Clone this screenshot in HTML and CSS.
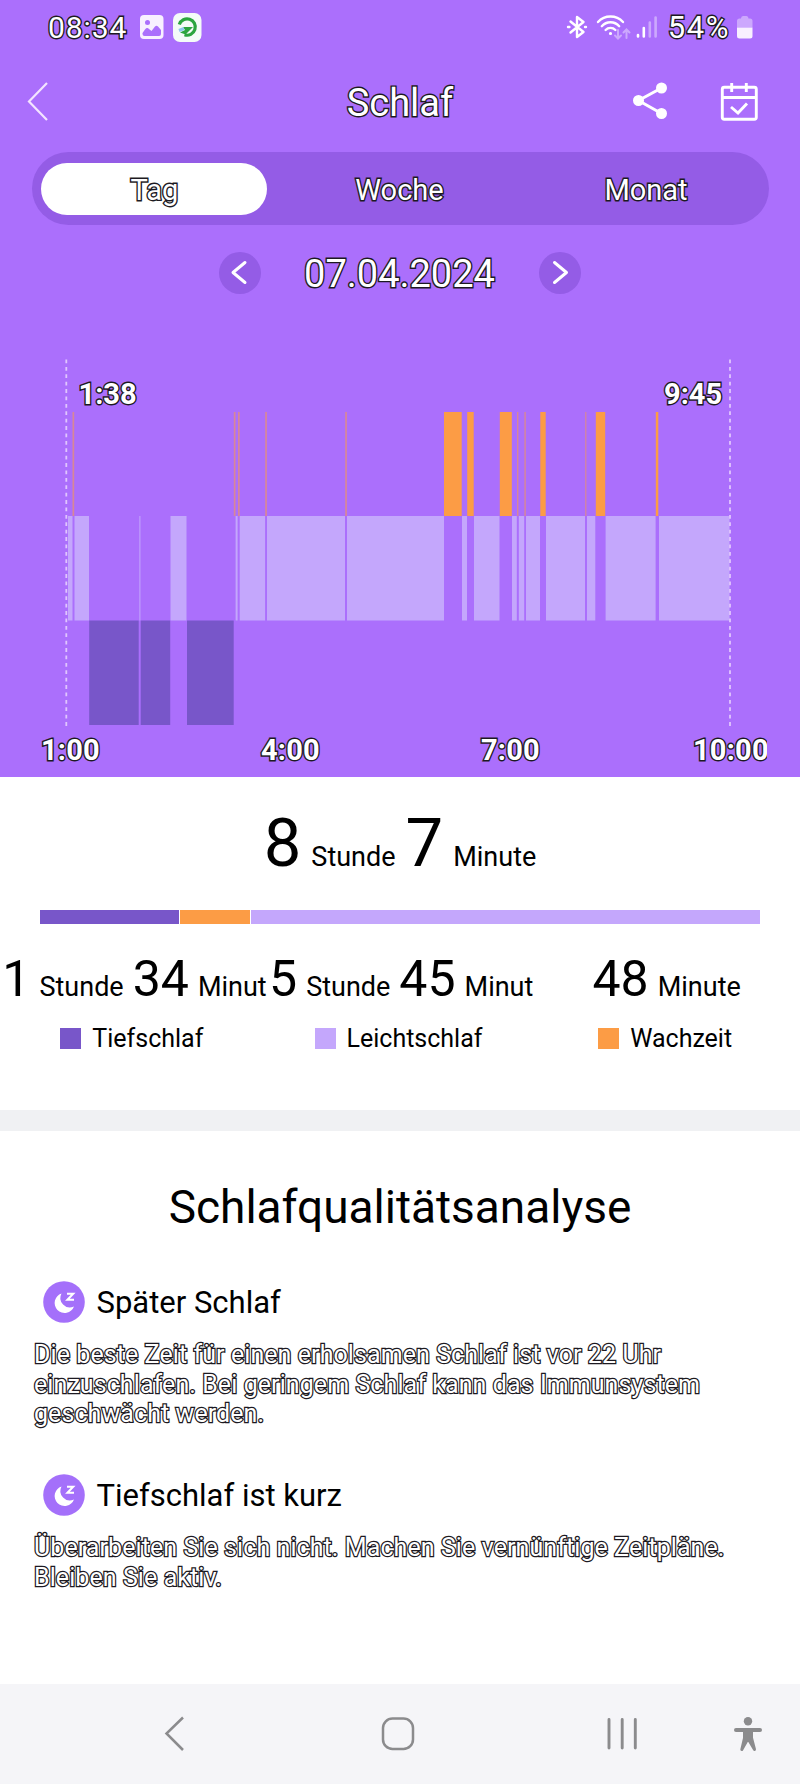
FILE: index.html
```html
<!DOCTYPE html>
<html lang="de">
<head>
  <meta charset="utf-8" />
  <meta name="viewport" content="width=device-width, initial-scale=1">
  <title>Schlaf</title>
  <link rel="stylesheet" href="styles.css">
</head>
<body>
  <div class="top">
    <div class="status">
      <span class="status__time outline">08:34</span>
      <svg class="status__image" width="24" height="24" viewBox="0 0 24 24">
        <rect x="0" y="0" width="23.5" height="24" rx="4" fill="#f8f0ff"/>
        <circle cx="7.5" cy="7.5" r="2.5" fill="#ab6ffc"/>
        <path d="M2.5 18 L5 14.5 Q7 12 9 14 L11.5 16 L15 11.5 Q16.5 10 18 11.5 L21 15 V19 Q21 21 19 21 H4.5 Q2.5 21 2.5 19 Z" fill="#ab6ffc"/>
      </svg>
      <svg class="status__app" width="29" height="29" viewBox="0 0 29 29">
        <rect width="28.5" height="29" rx="7" fill="#f4fbf8"/>
        <path d="M6.3 11.5 A8.2 8.2 0 1 1 11.5 21.8" fill="none" stroke="#2ba53f" stroke-width="3.2"/>
        <path d="M10 14 H20 L12.5 21.5 L7 19.5 L12 17 Z" fill="#2ba53f"/>
        <path d="M6 17.5 L11 15.5" stroke="#8fc8ee" stroke-width="3"/>
      </svg>
      <div class="status__right">
        <svg class="status__bt" width="22" height="24" viewBox="0 0 22 24" fill="none" stroke="#fff" stroke-width="2.4" stroke-linejoin="round" stroke-linecap="round">
          <path d="M4.5 6.5 L17.5 17 L11 22 V2 L17.5 7 L4.5 17.5"/>
          <path d="M2 12 H3.4 M19 12 H20"/>
        </svg>
        <svg class="status__wifi" width="36" height="26" viewBox="0 0 36 26" fill="none" stroke="#fff" stroke-width="2.4" stroke-linecap="round">
          <path d="M2 8 A17 17 0 0 1 27 8"/>
          <path d="M5.8 12.2 A11.6 11.6 0 0 1 23.2 12.2"/>
          <path d="M9.6 16 A6.8 6.8 0 0 1 19.4 16"/>
          <circle cx="14.5" cy="19.5" r="1" fill="#fff" stroke-width="1.2"/>
          <path class="faded" d="M22 16 V24 M19 21.5 L22 24.5 L25 21.5 M30.5 24 V16 M27.5 18.5 L30.5 15.5 L33.5 18.5" stroke-width="2"/>
        </svg>
        <svg class="status__signal" width="22" height="24" viewBox="0 0 22 24" stroke="#fff" stroke-width="2.6" stroke-linecap="round">
          <path d="M2 20 V21.5 M7.8 13 V21.5"/>
          <path class="faded" d="M13.8 7.5 V21.5 M19.6 2.5 V21.5"/>
        </svg>
        <span class="status__percent outline">54%</span>
        <svg class="status__battery" width="16" height="23" viewBox="0 0 16 23">
          <path class="faded" d="M0 11.5 V5 Q0 2.5 2.5 2.5 H4 Q4 0 6 0 H9.5 Q11.5 0 11.5 2.5 H13 Q15.5 2.5 15.5 5 V11.5 Z" fill="#fff"/>
          <path d="M0 11.5 H15.5 V20 Q15.5 22.5 13 22.5 H2.5 Q0 22.5 0 20 Z" fill="#f8f0ff"/>
        </svg>
      </div>
    </div>

    <div class="header">
      <svg class="header__back" width="24" height="42" viewBox="0 0 24 42" fill="none" stroke="#f3e4ff" stroke-width="2.2">
        <path d="M20 2 L2 20.5 L20 39"/>
      </svg>
      <h1 class="header__title outline">Schlaf</h1>
      <div class="header__icons">
        <svg width="36" height="38" viewBox="0 0 36 38" fill="#fff" stroke="#fff" stroke-width="3">
          <path d="M29.5 6 L6.5 18.5 L29.5 31.5" fill="none"/>
          <circle cx="6.5" cy="18.5" r="4"/>
          <circle cx="29.5" cy="6" r="4"/>
          <circle cx="29.5" cy="31.5" r="4"/>
        </svg>
        <svg width="38" height="40" viewBox="0 0 38 40" fill="none" stroke="#fff" stroke-width="2.9">
          <rect x="2.3" y="6.3" width="34" height="32" rx="2"/>
          <path d="M2.3 16.5 H36.3 M11.7 2 V11 M26.3 2 V11"/>
          <path d="M11 26 L18 32 L27 22.5"/>
        </svg>
      </div>
    </div>

    <div class="tabs">
      <div class="tab tab--active outline">Tag</div>
      <div class="tab outline">Woche</div>
      <div class="tab outline">Monat</div>
    </div>

    <div class="date">
      <div class="date__btn">
        <svg width="42" height="42" viewBox="0 0 42 42" fill="none" stroke="#fff" stroke-width="3" stroke-linecap="round" stroke-linejoin="round">
          <path d="M26 10.5 L14 20.5 L26 30.5"/>
        </svg>
      </div>
      <div class="date__text outline">07.04.2024</div>
      <div class="date__btn">
        <svg width="42" height="42" viewBox="0 0 42 42" fill="none" stroke="#fff" stroke-width="3" stroke-linecap="round" stroke-linejoin="round">
          <path d="M15.5 10.5 L27.5 20.5 L15.5 30.5"/>
        </svg>
      </div>
    </div>

    <div class="chart">
      <!-- rows start at 62 (awake), 166 (light) and 270.5 (deep) -->
      <svg class="chart__svg" width="800" height="384" viewBox="0 0 800 384">
        <g class="light">
          <rect x="68" y="166" width="4.5" height="104.5"/>
          <rect x="74.5" y="166" width="14.5" height="104.5"/>
          <rect x="139.4" y="166" width="1" height="104.5"/>
          <rect x="170.5" y="166" width="16" height="104.5"/>
          <rect x="235.6" y="166" width="2" height="104.5"/>
          <rect x="239.7" y="166" width="25.4" height="104.5"/>
          <rect x="267" y="166" width="78" height="104.5"/>
          <rect x="347" y="166" width="97" height="104.5"/>
          <rect x="462" y="166" width="5" height="104.5"/>
          <rect x="474" y="166" width="25.5" height="104.5"/>
          <rect x="512" y="166" width="4.8" height="104.5"/>
          <rect x="518.8" y="166" width="5.4" height="104.5"/>
          <rect x="526" y="166" width="14" height="104.5"/>
          <rect x="546" y="166" width="39" height="104.5"/>
          <rect x="587" y="166" width="8.3" height="104.5"/>
          <rect x="605.6" y="166" width="50" height="104.5"/>
          <rect x="659" y="166" width="70.5" height="104.5"/>
        </g>
        <g class="deep">
          <rect x="89.2" y="270.5" width="49.5" height="104.5"/>
          <rect x="140.7" y="270.5" width="29.5" height="104.5"/>
          <rect x="187" y="270.5" width="46.7" height="104.5"/>
        </g>
        <g class="awake">
          <rect x="444" y="62" width="17.7" height="104"/>
          <rect x="467.2" y="62" width="6.5" height="104"/>
          <rect x="499.8" y="62" width="12" height="104"/>
          <rect x="540.3" y="62" width="5.4" height="104"/>
          <rect x="595.8" y="62" width="9.4" height="104"/>
          <rect x="655.8" y="62" width="2.5" height="104"/>
        </g>
        <g class="awake awake--thin">
          <rect x="72.5" y="62" width="1.7" height="104"/>
          <rect x="233.8" y="62" width="1.7" height="104"/>
          <rect x="238" y="62" width="1.7" height="104"/>
          <rect x="265.2" y="62" width="1.7" height="104"/>
          <rect x="345.2" y="62" width="1.7" height="104"/>
          <rect x="517" y="62" width="1.4" height="104"/>
          <rect x="524.4" y="62" width="1.4" height="104"/>
          <rect x="585.2" y="62" width="1.2" height="104"/>
        </g>
        <path class="chart__line" d="M66.3 9.5 V376 M730 9.5 V376"/>
        <text class="chart__text" x="78.5" y="54">1:38</text>
        <text class="chart__text" x="664" y="54">9:45</text>
      </svg>
      <div class="chart__axis">
        <span>1:00</span>
        <span>4:00</span>
        <span>7:00</span>
        <span>10:00</span>
      </div>
    </div>
  </div>

  <div class="summary">
    <div class="total">
      <span class="total__num">8</span>
      <span class="unit">Stunde</span>
      <span class="total__num">7</span>
      <span class="unit">Minute</span>
    </div>
    <div class="bar">
      <div class="bar__deep"></div>
      <div class="bar__awake"></div>
      <div class="bar__light"></div>
    </div>
    <div class="stats">
      <div class="stat">
        <div class="stat__value stat__value--long">
          <span class="stat__num">1</span>
          <span class="unit">Stunde</span>
          <span class="stat__num">34</span>
          <span class="unit">Minut</span>
        </div>
        <div class="stat__label"><i class="box box--deep"></i>Tiefschlaf</div>
      </div>
      <div class="stat">
        <div class="stat__value stat__value--long">
          <span class="stat__num">5</span>
          <span class="unit">Stunde</span>
          <span class="stat__num">45</span>
          <span class="unit">Minut</span>
        </div>
        <div class="stat__label"><i class="box box--light"></i>Leichtschlaf</div>
      </div>
      <div class="stat">
        <div class="stat__value">
          <span class="stat__num">48</span>
          <span class="unit">Minute</span>
        </div>
        <div class="stat__label"><i class="box box--awake"></i>Wachzeit</div>
      </div>
    </div>
  </div>

  <div class="analysis">
    <h2 class="analysis__title">Schlafqualitätsanalyse</h2>
    <div class="tip">
      <div class="tip__head">
        <svg width="42" height="42" viewBox="0 0 42 42">
          <circle cx="21" cy="21" r="20.8" fill="#a470fa"/>
          <path d="M18.5 12.5 A10 10 0 1 0 31 25.5 A9.5 9.5 0 0 1 18.5 12.5 Z" fill="#fff"/>
          <path d="M24 12.7 H30.2 L24.4 18.7 H31" fill="none" stroke="#fff" stroke-width="2"/>
        </svg>
        <h3 class="tip__title">Später Schlaf</h3>
      </div>
      <p class="tip__text outline">Die beste Zeit für einen erholsamen Schlaf ist vor 22 Uhr<br>einzuschlafen. Bei geringem Schlaf kann das Immunsystem<br>geschwächt werden.</p>
    </div>
    <div class="tip">
      <div class="tip__head">
        <svg width="42" height="42" viewBox="0 0 42 42">
          <circle cx="21" cy="21" r="20.8" fill="#a470fa"/>
          <path d="M18.5 12.5 A10 10 0 1 0 31 25.5 A9.5 9.5 0 0 1 18.5 12.5 Z" fill="#fff"/>
          <path d="M24 12.7 H30.2 L24.4 18.7 H31" fill="none" stroke="#fff" stroke-width="2"/>
        </svg>
        <h3 class="tip__title">Tiefschlaf ist kurz</h3>
      </div>
      <p class="tip__text outline">Überarbeiten Sie sich nicht. Machen Sie vernünftige Zeitpläne.<br>Bleiben Sie aktiv.</p>
    </div>
  </div>

  <div class="nav">
    <svg class="nav__back" width="24" height="36" viewBox="0 0 24 36" fill="none" stroke="#8b8b8d" stroke-width="2.5">
      <path d="M20 1.5 L3.5 17.5 L20 34"/>
    </svg>
    <svg class="nav__home" width="34" height="36" viewBox="0 0 34 36" fill="none" stroke="#8b8b8d" stroke-width="2.5">
      <rect x="2" y="2.5" width="30" height="30.5" rx="9.5"/>
    </svg>
    <svg class="nav__recent" width="32" height="36" viewBox="0 0 32 36" stroke="#8b8b8d" stroke-width="2.9" stroke-linecap="round">
      <path d="M3 3.5 V32 M16.2 3.5 V32 M29.3 3.5 V32"/>
    </svg>
    <svg class="nav__access" width="30" height="36" viewBox="0 0 30 36" fill="#8b8b8d" stroke="#8b8b8d" stroke-linecap="round" stroke-linejoin="round">
      <circle cx="15" cy="5.3" r="4.2" stroke="none"/>
      <path d="M3 14 H27" stroke-width="4"/>
      <path d="M11.5 15 H18.5 V22 L21.5 33.5 L15 22.5 L8.8 33.5 L11.5 22 Z" stroke-width="3"/>
    </svg>
  </div>
</body>
</html>
```
FILE: styles.css
```css
*{
  box-sizing: border-box;
}
body{
  margin: 0;
  width: 800px;
  background: #fff;
  color: #000;
  font-family: Roboto, "Liberation Sans", sans-serif;
}
h1, h2, h3, p{
  margin: 0;
  font-weight: 400;
}
svg{
  display: block;
  flex-shrink: 0;
}
.outline{
  color: #fff;
  -webkit-text-stroke: 2.8px #1d1a22;
  paint-order: stroke fill;
}
.faded{
  opacity: 0.4;
}

.top{
  height: 777px;
  background: #ab6ffc;
}

/* status bar */
.status{
  height: 54px;
  padding: 0 47px 0 48px;
  display: flex;
  align-items: center;
}
.status__time{
  width: 92px;
  font-size: 30px;
  letter-spacing: 0.9px;
}
.status__app{
  margin-left: 9px;
}
.status__right{
  margin-left: auto;
  display: flex;
  align-items: center;
}
.status__wifi{
  margin-left: 8px;
}
.status__signal{
  margin-left: 4px;
}
.status__percent{
  margin: 0 7px 0 10px;
  font-size: 31px;
  letter-spacing: 1.6px;
}

/* title row */
.header{
  height: 98px;
  padding: 0 42px 0 27px;
  display: grid;
  grid-template-columns: 140px 1fr 140px;
  align-items: center;
}
.header__back{
  margin-top: -2px;
}
.header__title{
  padding-left: 15px;
  font-size: 38px;
  text-align: center;
}
.header__icons{
  display: flex;
  justify-content: space-between;
  align-items: center;
  width: 126px;
  margin: -4px 0 0 14px;
}

.tabs{
  width: 737px;
  height: 73px;
  margin-left: 32px;
  padding: 0 9px;
  display: flex;
  justify-content: space-between;
  align-items: center;
  background: #945ce6;
  border-radius: 37px;
}
.tab{
  width: 226px;
  height: 52px;
  padding-right: 2px;
  line-height: 55px;
  text-align: center;
  font-size: 29px;
  border-radius: 26px;
}
.tab--active{
  padding: 0 0 0 1px;
  background: #fff;
}

.date{
  height: 95px;
  padding-right: 1px;
  display: flex;
  justify-content: center;
  align-items: center;
}
.date__btn{
  width: 42px;
  height: 42px;
  border-radius: 50%;
  background: #945ce6;
}
.date__text{
  width: 278px;
  padding-top: 2px;
  text-align: center;
  font-size: 38px;
}

/* sleep chart */
.chart{
  padding-top: 30px;
}
.light{
  fill: #c4a7fc;
}
.deep{
  fill: #7856c9;
}
.awake{
  fill: #fc9c45;
}
.awake--thin{
  opacity: 0.55;
}
.chart__line{
  stroke: #e0c6fd;
  stroke-width: 1.8;
  stroke-dasharray: 3.8 3.6;
}
.chart__text{
  font-size: 29px;
  font-weight: 700;
  fill: #fff;
  stroke: #1d1a22;
  stroke-width: 2.8px;
  paint-order: stroke fill;
}
/* one label every three hours, the last one is cut at the edge */
.chart__axis{
  width: 726px;
  height: 34px;
  margin-left: 41px;
  display: grid;
  grid-template-columns: 220px 220px 212px 74px;
  overflow: hidden;
  font-size: 29px;
  font-weight: 700;
  line-height: 33px;
  letter-spacing: 0.2px;
  color: #fff;
  -webkit-text-stroke: 2.8px #1d1a22;
  paint-order: stroke fill;
}

/* summary */
.summary{
  height: 354px;
  border-bottom: 21px solid #f0f1f3;
}
.total{
  height: 133px;
  padding-top: 27px;
  display: flex;
  justify-content: center;
  align-items: baseline;
  gap: 10px;
}
.total__num{
  font-size: 67px;
}
.unit{
  font-size: 27px;
}
.bar{
  height: 14px;
  margin: 0 40px;
  display: flex;
  gap: 1px;
}
.bar__deep{
  width: 138.5px;
  background: #7856c9;
}
.bar__awake{
  width: 70px;
  background: #fc9c45;
}
.bar__light{
  flex: 1;
  background: #c4a7fc;
}
.stats{
  display: grid;
  grid-template-columns: repeat(3, 1fr);
  padding-top: 26px;
}
.stat__value{
  display: flex;
  justify-content: center;
  align-items: baseline;
  gap: 9px;
  height: 74px;
}
.stat__value--long{
  justify-content: flex-end;
}
.stat__num{
  font-size: 50px;
}
.stat__label{
  display: flex;
  justify-content: center;
  align-items: center;
  padding-right: 3px;
  font-size: 25px;
  line-height: 29px;
}
.box{
  width: 21px;
  height: 21px;
  margin-right: 11px;
}
.box--deep{
  background: #7856c9;
}
.box--light{
  background: #c4a7fc;
}
.box--awake{
  background: #fc9c45;
}

/* analysis */
.analysis{
  height: 553px;
}
.analysis__title{
  height: 150px;
  padding-top: 49px;
  font-size: 46px;
  line-height: 54px;
  text-align: center;
}
.tip{
  height: 193px;
}
.tip__head{
  display: flex;
  align-items: center;
  padding-left: 43px;
}
.tip__title{
  margin-left: 11.5px;
  padding-top: 2px;
  font-size: 31px;
  line-height: 40px;
}
.tip__text{
  margin: 17px 0 0 34px;
  font-size: 25px;
  letter-spacing: 0.08px;
  line-height: 29.7px;
  white-space: nowrap;
  -webkit-text-stroke-width: 2.5px;
}

/* bottom navigation */
.nav{
  height: 100px;
  display: flex;
  align-items: center;
  background: #f5f5f8;
}
.nav__back{
  margin-left: 163px;
}
.nav__home{
  margin-left: 193.5px;
}
.nav__recent{
  margin-left: 191.5px;
}
.nav__access{
  margin-left: 95px;
}
```
